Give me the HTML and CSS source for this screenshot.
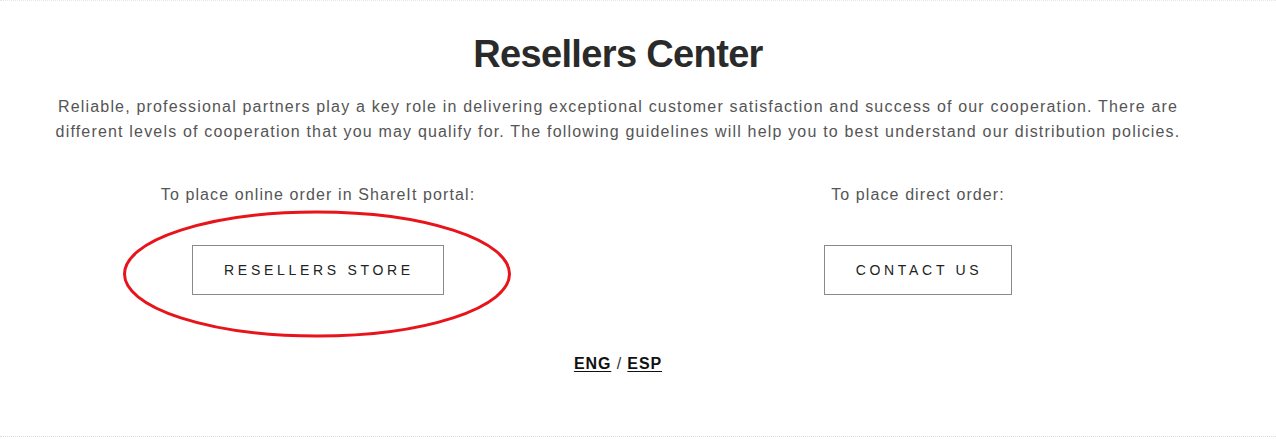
FILE: index.html
```html
<!DOCTYPE html>
<html lang="en">
<head>
<meta charset="utf-8">
<title>Resellers Center</title>
<link rel="stylesheet" href="styles.css">
</head>
<body>
<div class="frame">
  <main class="page">
    <h1 class="title">Resellers Center</h1>
    <p class="intro">Reliable, professional partners play a key role in delivering exceptional customer satisfaction and success of our cooperation. There are different levels of cooperation that you may qualify for. The following guidelines will help you to best understand our distribution policies.</p>
    <div class="columns">
      <section class="col">
        <p class="label">To place online order in ShareIt portal:</p>
        <div class="btn-wrap">
          <a class="btn" href="#">RESELLERS STORE</a>
          <svg class="circle" width="392" height="130" viewBox="0 0 392 130" aria-hidden="true">
            <ellipse cx="196" cy="65" rx="192.5" ry="62" fill="none" stroke="#e8141b" stroke-width="3"/>
          </svg>
        </div>
      </section>
      <section class="col">
        <p class="label">To place direct order:</p>
        <div class="btn-wrap">
          <a class="btn" href="#">CONTACT US</a>
        </div>
      </section>
    </div>
    <p class="lang"><a href="#">ENG</a> <span class="sep">/</span> <a href="#">ESP</a></p>
  </main>
</div>
</body>
</html>
```
FILE: styles.css
```css
html, body {
  margin: 0;
  padding: 0;
  background: #fff;
}
body {
  font-family: "Liberation Sans", Helvetica, Arial, sans-serif;
  color: #555;
}
.frame {
  height: 437px;
  border-top: 1px dotted #e6e6e6;
  border-bottom: 1px dotted #dcdcdc;
  box-sizing: border-box;
}
.page {
  width: 1200px;
  margin-left: 18px;
  padding-top: 30px;
  text-align: center;
}
.title {
  margin: 0;
  font-size: 38px;
  line-height: 46px;
  font-weight: bold;
  letter-spacing: -0.65px;
  color: #2a2a2a;
}
.intro {
  max-width: 1150px;
  margin: 17px auto 0;
  font-size: 16px;
  line-height: 25px;
  color: #555;
  letter-spacing: 1.18px;
}
.columns {
  display: grid;
  grid-template-columns: 1fr 1fr;
  margin-top: 38px;
}
.label {
  margin: 0;
  font-size: 16px;
  line-height: 25px;
  color: #555;
  letter-spacing: 1.1px;
}
.btn-wrap {
  position: relative;
  display: flex;
  justify-content: center;
  margin-top: 38px;
}
.btn {
  display: inline-flex;
  align-items: center;
  height: 50px;
  box-sizing: border-box;
  padding: 0 29px 0 31px;
  border: 1px solid #8a8a8a;
  font-size: 14px;
  letter-spacing: 3.7px;
  color: #222;
  text-decoration: none;
}
.circle {
  position: absolute;
  left: 50%;
  top: -36px;
  margin-left: -197px;
  pointer-events: none;
}
.lang {
  margin: 59px 0 0;
  font-size: 16px;
  line-height: 20px;
  font-weight: bold;
  letter-spacing: 0.9px;
}
.lang a {
  color: #111;
  text-decoration: underline;
  text-underline-offset: 2px;
}
.sep {
  font-weight: normal;
  color: #333;
}
```
